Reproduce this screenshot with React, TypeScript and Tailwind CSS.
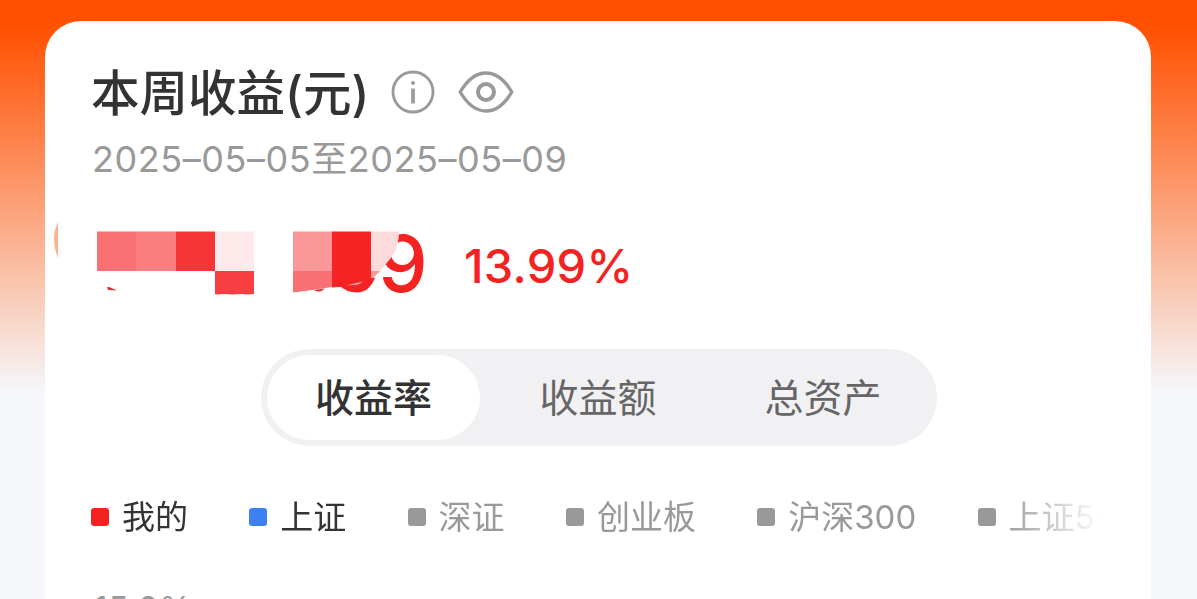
import React from "react";

interface LegendItem {
  label: string;
  dot: string;
  text: string;
}

const legend: LegendItem[] = [
  { label: "我的", dot: "bg-[#f52222]", text: "text-[#333333]" },
  { label: "上证", dot: "bg-[#3c80f2]", text: "text-[#333333]" },
  { label: "深证", dot: "bg-[#999999]", text: "text-[#999999]" },
  { label: "创业板", dot: "bg-[#999999]", text: "text-[#999999]" },
  { label: "沪深300", dot: "bg-[#999999]", text: "text-[#999999]" },
  { label: "上证50", dot: "bg-[#999999]", text: "text-[#999999]" },
];

const tabs = ["收益率", "收益额", "总资产"];

const InfoIcon = () => (
  <svg width="44" height="44" viewBox="0 0 44 44" fill="none" stroke="#999999">
    <circle cx="22" cy="22" r="20" strokeWidth="2.8" />
    <path d="M22 18.500v15" strokeWidth="3.6" />
    <circle cx="22" cy="13" r="2" fill="#999999" stroke="none" />
  </svg>
);

const EyeIcon = () => (
  <svg width="56" height="44" viewBox="0 0 56 44" fill="none" stroke="#999999">
    <path
      d="M2.200 22C9 10.500 18 3 28 3s19 7.500 25.800 19C47 33.500 38 41 28 41S9 33.500 2.200 22Z"
      strokeWidth="3.400"
      strokeLinejoin="round"
    />
    <circle cx="28" cy="22" r="8" strokeWidth="4" />
  </svg>
);

// Mosaic that hides the leading digits of the amount
const AmountMask = () => (
  <svg
    className="absolute left-0 top-0"
    width="340"
    height="80"
    viewBox="0 0 340 80"
  >
    <rect x="5" y="11.500" width="39.500" height="39.500" fill="#f97175" />
    <rect x="44" y="11.500" width="40" height="39.500" fill="#fa7d7f" />
    <rect x="84" y="11.500" width="39" height="39.500" fill="#f53639" />
    <rect x="123" y="11.500" width="39" height="39.500" fill="#feeaeb" />
    <path d="M123 51h39v23l-6 .5-7-.5-8 .5-8-.5-10 .5Z" fill="#f73f43" />
    <path d="M15 67l3 .2 7 3.300-9-.500Z" fill="#e23136" />
    <rect x="201" y="11.500" width="39.500" height="39.500" fill="#fa9798" />
    <path d="M201 51h39v16l-20 3-19 2.500Z" fill="#f87073" />
    <path d="M222 70q5 3 9 0l2-1.500Z" fill="#dd3036" />
    <path d="M240 11.500h39v48l-8 4-16 3-15 1Z" fill="#f52323" />
    <path
      d="M247 65q7 7.500 18 7.500 12 0 18-14.500l-4-1-16 6Z"
      fill="#f52323"
    />
    <path d="M254 65.500l17-4-5 3Z" fill="#fbb6b8" />
    <path d="M279 11.500h28q0 19-11.500 30.500l-9 11-7 4Z" fill="#fddbdc" />
    <path d="M279 51h9l-7 7h-2Z" fill="#fa9798" />
  </svg>
);

const App: React.FC = () => {
  return (
    <div className="relative h-[599px] w-[1197px] overflow-hidden bg-[#f6f7fa] bg-[linear-gradient(180deg,#ff5000_0px,#ff5000_24px,#ff6c29_90px,#fca077_205px,#f9c4ac_280px,#f6f7fa_392px)] pl-[45px] pr-[46px] pt-[21px] font-[Inter,'Noto_Sans_CJK_SC',sans-serif]">
      <main className="h-[620px] rounded-t-[36px] bg-white pl-[46px] pr-[54px] pt-[41px]">
        {/* Judul dan ikon */}
        <div className="flex h-[60px] items-center">
          <h1 className="w-[276px] whitespace-nowrap pt-[3px] text-[48.5px] font-medium leading-[60px] text-[#333333]">
            本周收益(元)
          </h1>
          <div className="ml-[24px] flex gap-[23px]">
            <InfoIcon />
            <EyeIcon />
          </div>
        </div>

        <p className="mt-[13px] h-12 whitespace-nowrap pl-px text-[36px] leading-[48px] tracking-[0.55px] text-[#999999]">
          2025–05–05至2025–05–09
        </p>

        <div className="relative ml-px mt-[37px] flex h-20 items-center text-[#f52222]">
          {/* Sisa coretan di tepi kiri kartu */}
          <svg
            className="absolute -left-[39px] top-0"
            width="6"
            height="40"
            viewBox="0 0 6 40"
          >
            <path d="M5 2Q-3 19 5 38Z" fill="#fbb28f" />
          </svg>
          <span className="ml-[286px] w-[51px] pt-[5px] text-[79px] font-medium leading-[80px]">
            9
          </span>
          <span className="ml-[35px] pt-[11px] text-[47px] font-medium leading-[60px] tracking-[0.3px]">
            13.99%
          </span>
          <AmountMask />
        </div>

        <div className="ml-[170px] mt-[49px] flex h-[97px] w-[676px] rounded-full bg-[#f1f1f4] p-[6px]">
          {tabs.map((tab, i) => (
            <button
              key={tab}
              className={
                i === 0
                  ? "h-[85px] w-[213px] rounded-full bg-white pt-[2px] text-[39px] font-medium text-[#333333]"
                  : "h-[85px] w-[225px] pl-[11px] pt-[2px] text-[39px] text-[#666666]"
              }
            >
              {tab}
            </button>
          ))}
        </div>

        <div className="mt-[46px] flex h-[50px] gap-[61.3px] overflow-hidden [mask-image:linear-gradient(90deg,black_910px,transparent_1012px)]">
          {legend.map((item) => (
            <div key={item.label} className="flex shrink-0 items-center">
              <span className={`size-[18px] rounded-[3px] ${item.dot}`} />
              <span
                className={`ml-[13px] whitespace-nowrap text-[33px] leading-[50px] ${item.text}`}
              >
                {item.label}
              </span>
            </div>
          ))}
        </div>

        {/* Label teratas sumbu grafik */}
        <div className="ml-[3px] mt-[46px] text-[33px] leading-[40px] tracking-[0.8px] text-[#999999]">
          15.0%
        </div>
      </main>
    </div>
  );
};

export default App;
